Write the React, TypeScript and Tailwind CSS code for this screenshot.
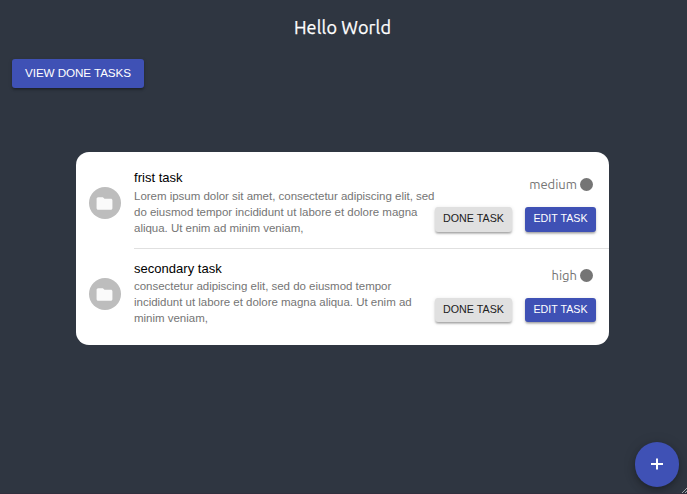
import React from "react";

interface Task {
  title: string;
  text: string;
  level: string;
}

const tasks: Task[] = [
  {
    title: "frist task",
    text: "Lorem ipsum dolor sit amet, consectetur adipiscing elit, sed do eiusmod tempor incididunt ut labore et dolore magna aliqua. Ut enim ad minim veniam,",
    level: "medium",
  },
  {
    title: "secondary task",
    text: "consectetur adipiscing elit, sed do eiusmod tempor incididunt ut labore et dolore magna aliqua. Ut enim ad minim veniam,",
    level: "high",
  },
];

const raised =
  "shadow-[0_2px_2px_-1px_rgba(0,0,0,0.2),0_2px_2px_0_rgba(0,0,0,0.14),0_1px_4px_0_rgba(0,0,0,0.12)]";
const ubuntu = "font-['Ubuntu','Noto_Sans',sans-serif]";

function TaskRow({ task, last }: { task: Task; last: boolean }) {
  const buttonHeight = last ? "h-6 pb-[2px]" : "h-[25px] pb-[3px]";
  return (
    <li className="flex h-[91px] pl-[13px]">
      <span className="mt-[29px] flex size-8 shrink-0 items-center justify-center rounded-full bg-[#bdbdbd]">
        <svg viewBox="0 0 24 24" className="mr-px size-[19px] fill-[#fafafa]">
          <path d="M10 4H4c-1.1 0-1.99.9-1.99 2L2 18c0 1.1.9 2 2 2h16c1.1 0 2-.9 2-2V8c0-1.1-.9-2-2-2h-8l-2-2z" />
        </svg>
      </span>
      <div className={`ml-[13px] flex flex-1 ${last ? "" : "border-b border-[#e0e0e0]"}`}>
        <div className="w-[301px] shrink-0 pt-[10px]">
          <h2 className="text-[13px] leading-[19px] tracking-[0.02px] text-black">{task.title}</h2>
          <p className={`-mr-1 text-[11.5px] leading-4 tracking-[-0.02px] text-[#757575] ${last ? "" : "pt-px"}`}>{task.text}</p>
        </div>
        <div className="flex flex-1 flex-col items-end pr-[13px] pt-[17px]">
          <div className="flex h-[19px] items-center pr-[3px] text-[#757575]">
            <span className={`${ubuntu} text-[13px] leading-[19px]`}>{task.level}</span>
            <span className="ml-[3px] size-[13px] rounded-full bg-[#757575]" />
          </div>
          <div className="mt-[13px] flex gap-[13px]">
            <button className={`${buttonHeight} w-[77px] whitespace-nowrap rounded-[3px] bg-[#e0e0e0] text-[10.7px] leading-[18px] tracking-[0.02px] text-[#212121] ${raised}`}>
              DONE TASK
            </button>
            <button className={`${buttonHeight} w-[71px] whitespace-nowrap rounded-[3px] bg-[#3f51b5] text-[10.7px] leading-[18px] tracking-[0.02px] text-white ${raised}`}>
              EDIT TASK
            </button>
          </div>
        </div>
      </div>
    </li>
  );
}

export default function App() {
  return (
    <main className="relative h-[494px] w-[687px] overflow-hidden border-b border-[#302f3d] bg-[#2f3641] font-['Liberation_Sans',sans-serif]">
      <h1 className={`${ubuntu} pr-[2px] pt-[15px] text-center text-[18px] font-normal leading-[24px] tracking-[0.15px] text-white [-webkit-text-stroke:0.25px_white]`}>Hello World</h1>
      <button className={`ml-3 mt-5 block h-[29px] w-[132px] whitespace-nowrap rounded-[3px] bg-[#3f51b5] pb-px text-[11.7px] leading-[20px] tracking-[-0.1px] text-white ${raised}`}>
        VIEW DONE TASKS
      </button>
      <ul className="ml-[76px] mt-16 h-[193px] w-[533px] rounded-[13px] bg-white pt-[6px]">
        {tasks.map((task, i) => (
          <TaskRow key={task.title} task={task} last={i === tasks.length - 1} />
        ))}
      </ul>
      <button
        aria-label="Add task"
        className="absolute left-[635px] top-[442px] flex h-[45px] w-[44px] items-center justify-center rounded-full bg-[#3f51b5] shadow-[0_2px_4px_-1px_rgba(0,0,0,0.2),0_5px_8px_0_rgba(0,0,0,0.14),0_1px_14px_0_rgba(0,0,0,0.12)]"
      >
        <svg viewBox="0 0 12 12" className="mb-px size-3 fill-none stroke-white stroke-2">
          <path d="M0 6h12M6 0.5v11" />
        </svg>
      </button>
      <svg viewBox="0 0 5 5" className="absolute bottom-0 right-0 size-[5px] fill-none stroke-[#a5a8ac]">
        <path d="M0 5L5 0M3 5L5 3" />
      </svg>
    </main>
  );
}
